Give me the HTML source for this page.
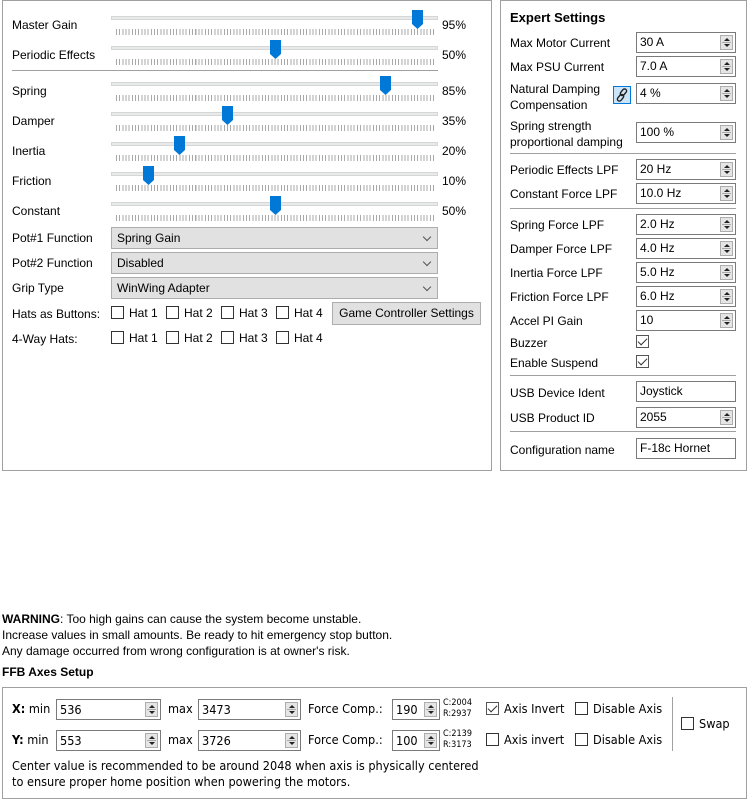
<!DOCTYPE html>
<html><head><meta charset="utf-8">
<style>
*{box-sizing:border-box}
body{margin:0;width:750px;height:803px;background:#fff;font-family:"Liberation Sans",sans-serif;font-size:12px;color:#000;position:relative;overflow:hidden}
.a{position:absolute;white-space:nowrap;line-height:16px}
.box{position:absolute;border:1px solid #a0a0a0}
.track{position:absolute;left:111px;width:327px;height:4px;background:#e7eaea;border:1px solid #d6d6d6}
.ticks{position:absolute;left:116px;width:318px;height:6px;background:repeating-linear-gradient(90deg,#a8a8a8 0 1px,transparent 1px 3.17px)}
.h{position:absolute;width:11px;height:19px}
.combo{position:absolute;left:111px;width:327px;height:22px;border:1px solid #adadad;background:#e1e1e1;padding-left:5px;line-height:20px}
.combo:after{content:"";position:absolute;right:7px;top:6px;width:5px;height:5px;border-right:1px solid #555;border-bottom:1px solid #555;transform:rotate(45deg)}
.chk{position:absolute;width:13px;height:13px;border:1px solid #333;background:#fff}
.chk.on:after{content:"";position:absolute;left:3px;top:0px;width:4px;height:8px;border-right:1px solid #333;border-bottom:1px solid #333;transform:rotate(45deg)}
.sp{position:absolute;height:21px;border:1px solid #7a7a7a;background:#fff;padding-left:3px;line-height:19px}
.sp .ar{position:absolute;right:2px;top:2px;width:13px;height:15px;border:1px solid #adadad;background:#e5e5e5}
.sp .ar:before{content:"";position:absolute;left:3px;top:2px;border:3px solid transparent;border-bottom:3px solid #222;border-top:0}
.sp .ar:after{content:"";position:absolute;left:3px;top:8px;border:3px solid transparent;border-top:3px solid #222;border-bottom:0}
.sp .ar i{position:absolute;left:1px;right:1px;top:6px;height:1px;background:#aaa}
.le{position:absolute;height:21px;border:1px solid #7a7a7a;background:#fff;padding-left:3px;line-height:19px}
.sep{position:absolute;height:1px;background:#a0a0a0}
.n{font-family:"Liberation Sans Narrow","DejaVu Sans Condensed","Liberation Sans",sans-serif;font-size:12.6px}
</style></head><body>

<div class="box" style="left:2px;top:0;width:490px;height:471px"></div>
<div class="box" style="left:500px;top:0;width:247px;height:471px"></div>

<div class="a" style="left:12px;top:17px">Master Gain</div>
<div class="track" style="top:16px"></div><div class="ticks" style="top:29px"></div>
<svg class="h" style="left:412px;top:10px" viewBox="0 0 11 19"><path d="M0 0H11V14L5.5 19L0 14Z" fill="#0078d7"/></svg>
<div class="a" style="left:442px;top:17px">95%</div>

<div class="a" style="left:12px;top:47px">Periodic Effects</div>
<div class="track" style="top:46px"></div><div class="ticks" style="top:59px"></div>
<svg class="h" style="left:270px;top:40px" viewBox="0 0 11 19"><path d="M0 0H11V14L5.5 19L0 14Z" fill="#0078d7"/></svg>
<div class="a" style="left:442px;top:47px">50%</div>

<div class="sep" style="left:12px;top:70px;width:426px"></div>

<div class="a" style="left:12px;top:83px">Spring</div>
<div class="track" style="top:82px"></div><div class="ticks" style="top:95px"></div>
<svg class="h" style="left:380px;top:76px" viewBox="0 0 11 19"><path d="M0 0H11V14L5.5 19L0 14Z" fill="#0078d7"/></svg>
<div class="a" style="left:442px;top:83px">85%</div>

<div class="a" style="left:12px;top:113px">Damper</div>
<div class="track" style="top:112px"></div><div class="ticks" style="top:125px"></div>
<svg class="h" style="left:222px;top:106px" viewBox="0 0 11 19"><path d="M0 0H11V14L5.5 19L0 14Z" fill="#0078d7"/></svg>
<div class="a" style="left:442px;top:113px">35%</div>

<div class="a" style="left:12px;top:143px">Inertia</div>
<div class="track" style="top:142px"></div><div class="ticks" style="top:155px"></div>
<svg class="h" style="left:174px;top:136px" viewBox="0 0 11 19"><path d="M0 0H11V14L5.5 19L0 14Z" fill="#0078d7"/></svg>
<div class="a" style="left:442px;top:143px">20%</div>

<div class="a" style="left:12px;top:173px">Friction</div>
<div class="track" style="top:172px"></div><div class="ticks" style="top:185px"></div>
<svg class="h" style="left:143px;top:166px" viewBox="0 0 11 19"><path d="M0 0H11V14L5.5 19L0 14Z" fill="#0078d7"/></svg>
<div class="a" style="left:442px;top:173px">10%</div>

<div class="a" style="left:12px;top:203px">Constant</div>
<div class="track" style="top:202px"></div><div class="ticks" style="top:215px"></div>
<svg class="h" style="left:270px;top:196px" viewBox="0 0 11 19"><path d="M0 0H11V14L5.5 19L0 14Z" fill="#0078d7"/></svg>
<div class="a" style="left:442px;top:203px">50%</div>

<div class="a" style="left:12px;top:230px">Pot#1 Function</div>
<div class="combo" style="top:227px">Spring Gain</div>
<div class="a" style="left:12px;top:255px">Pot#2 Function</div>
<div class="combo" style="top:252px">Disabled</div>
<div class="a" style="left:12px;top:280px">Grip Type</div>
<div class="combo" style="top:277px">WinWing Adapter</div>

<div class="a" style="left:12px;top:306px">Hats as Buttons:</div>
<div class="chk" style="left:111px;top:306px"></div><div class="a" style="left:129px;top:305px">Hat 1</div>
<div class="chk" style="left:166px;top:306px"></div><div class="a" style="left:184px;top:305px">Hat 2</div>
<div class="chk" style="left:221px;top:306px"></div><div class="a" style="left:239px;top:305px">Hat 3</div>
<div class="chk" style="left:276px;top:306px"></div><div class="a" style="left:294px;top:305px">Hat 4</div>
<div class="a" style="left:332px;top:302px;width:149px;height:23px;border:1px solid #adadad;background:#e1e1e1;line-height:21px;text-align:center">Game Controller Settings</div>

<div class="a" style="left:12px;top:331px">4-Way Hats:</div>
<div class="chk" style="left:111px;top:331px"></div><div class="a" style="left:129px;top:330px">Hat 1</div>
<div class="chk" style="left:166px;top:331px"></div><div class="a" style="left:184px;top:330px">Hat 2</div>
<div class="chk" style="left:221px;top:331px"></div><div class="a" style="left:239px;top:330px">Hat 3</div>
<div class="chk" style="left:276px;top:331px"></div><div class="a" style="left:294px;top:330px">Hat 4</div>

<div class="a" style="left:510px;top:10px;font-weight:bold;font-size:13px">Expert Settings</div>
<div class="a" style="left:510px;top:35px">Max Motor Current</div>
<div class="sp" style="left:636px;top:32px;width:100px">30 A<div class="ar"><i></i></div></div>
<div class="a" style="left:510px;top:59px">Max PSU Current</div>
<div class="sp" style="left:636px;top:56px;width:100px">7.0 A<div class="ar"><i></i></div></div>
<div class="a" style="left:510px;top:81px">Natural Damping</div>
<div class="a" style="left:510px;top:97px">Compensation</div>
<div class="a" style="left:613px;top:86px;width:18px;height:18px;border:1px solid #0078d7;background:#cce4f7"></div>
<svg class="a" style="left:615px;top:88px" width="14" height="14" viewBox="0 0 14 14"><g fill="none" stroke="#222" stroke-width="1.4"><rect x="6.5" y="0.5" width="4" height="7.5" rx="2" transform="rotate(40 8.5 4.2)"/><rect x="3.5" y="6" width="4" height="7.5" rx="2" transform="rotate(40 5.5 9.8)"/></g></svg>
<div class="sp" style="left:636px;top:83px;width:100px">4 %<div class="ar"><i></i></div></div>
<div class="a" style="left:510px;top:118px">Spring strength</div>
<div class="a" style="left:510px;top:134px">proportional damping</div>
<div class="sp" style="left:636px;top:122px;width:100px">100 %<div class="ar"><i></i></div></div>
<div class="sep" style="left:510px;top:153px;width:226px"></div>
<div class="a" style="left:510px;top:162px">Periodic Effects LPF</div>
<div class="sp" style="left:636px;top:159px;width:100px">20 Hz<div class="ar"><i></i></div></div>
<div class="a" style="left:510px;top:186px">Constant Force LPF</div>
<div class="sp" style="left:636px;top:183px;width:100px">10.0 Hz<div class="ar"><i></i></div></div>
<div class="sep" style="left:510px;top:208px;width:226px"></div>
<div class="a" style="left:510px;top:217px">Spring Force LPF</div>
<div class="sp" style="left:636px;top:214px;width:100px">2.0 Hz<div class="ar"><i></i></div></div>
<div class="a" style="left:510px;top:241px">Damper Force LPF</div>
<div class="sp" style="left:636px;top:238px;width:100px">4.0 Hz<div class="ar"><i></i></div></div>
<div class="a" style="left:510px;top:265px">Inertia Force LPF</div>
<div class="sp" style="left:636px;top:262px;width:100px">5.0 Hz<div class="ar"><i></i></div></div>
<div class="a" style="left:510px;top:289px">Friction Force LPF</div>
<div class="sp" style="left:636px;top:286px;width:100px">6.0 Hz<div class="ar"><i></i></div></div>
<div class="a" style="left:510px;top:313px">Accel PI Gain</div>
<div class="sp" style="left:636px;top:310px;width:100px">10<div class="ar"><i></i></div></div>
<div class="a" style="left:510px;top:335px">Buzzer</div>
<div class="chk on" style="left:636px;top:335px;border-color:#555"></div>
<div class="a" style="left:510px;top:355px">Enable Suspend</div>
<div class="chk on" style="left:636px;top:355px;border-color:#555"></div>
<div class="sep" style="left:510px;top:375px;width:226px"></div>
<div class="a" style="left:510px;top:385px">USB Device Ident</div>
<div class="le" style="left:636px;top:381px;width:100px">Joystick</div>
<div class="a" style="left:510px;top:410px">USB Product ID</div>
<div class="sp" style="left:636px;top:407px;width:100px">2055<div class="ar"><i></i></div></div>
<div class="sep" style="left:510px;top:431px;width:226px"></div>
<div class="a" style="left:510px;top:442px">Configuration name</div>
<div class="le" style="left:636px;top:438px;width:100px">F-18c Hornet</div>

<div class="a" style="left:2px;top:611px"><b>WARNING</b>: Too high gains can cause the system become unstable.</div>
<div class="a" style="left:2px;top:627px">Increase values in small amounts. Be ready to hit emergency stop button.</div>
<div class="a" style="left:2px;top:643px">Any damage occurred from wrong configuration is at owner's risk.</div>
<div class="a" style="left:2px;top:664px;font-weight:bold">FFB Axes Setup</div>

<div class="box" style="left:2px;top:687px;width:745px;height:112px"></div>
<div class="n">
<div class="a" style="left:12px;top:701px"><b>X:</b> min</div>
<div class="sp" style="left:56px;top:699px;width:105px">536<div class="ar"><i></i></div></div>
<div class="a" style="left:168px;top:701px">max</div>
<div class="sp" style="left:198px;top:699px;width:103px">3473<div class="ar"><i></i></div></div>
<div class="a" style="left:308px;top:701px">Force Comp.:</div>
<div class="sp" style="left:392px;top:699px;width:48px">190<div class="ar"><i></i></div></div>
<div class="a" style="left:443px;top:698px;font-size:9px;line-height:11px">C:2004<br>R:2937</div>
<div class="chk on" style="left:486px;top:702px;border-color:#555"></div><div class="a" style="left:504px;top:701px">Axis Invert</div>
<div class="chk" style="left:575px;top:702px"></div><div class="a" style="left:593px;top:701px">Disable Axis</div>

<div class="a" style="left:12px;top:732px"><b>Y:</b> min</div>
<div class="sp" style="left:56px;top:730px;width:105px">553<div class="ar"><i></i></div></div>
<div class="a" style="left:168px;top:732px">max</div>
<div class="sp" style="left:198px;top:730px;width:103px">3726<div class="ar"><i></i></div></div>
<div class="a" style="left:308px;top:732px">Force Comp.:</div>
<div class="sp" style="left:392px;top:730px;width:48px">100<div class="ar"><i></i></div></div>
<div class="a" style="left:443px;top:729px;font-size:9px;line-height:11px">C:2139<br>R:3173</div>
<div class="chk" style="left:486px;top:733px"></div><div class="a" style="left:504px;top:732px">Axis invert</div>
<div class="chk" style="left:575px;top:733px"></div><div class="a" style="left:593px;top:732px">Disable Axis</div>

<div class="sep" style="left:672px;top:697px;width:1px;height:54px"></div>
<div class="chk" style="left:681px;top:717px"></div><div class="a" style="left:699px;top:716px">Swap</div>

<div class="a" style="left:12px;top:758px">Center value is recommended to be around 2048 when axis is physically centered</div>
<div class="a" style="left:12px;top:774px">to ensure proper home position when powering the motors.</div>
</div>
</body></html>
